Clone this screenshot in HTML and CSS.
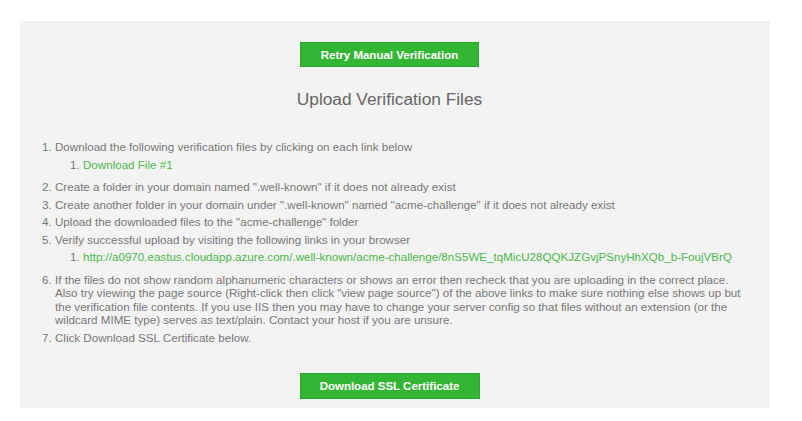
FILE: index.html
```html
<!DOCTYPE html>
<html lang="en">
<head>
    <meta charset="UTF-8">
    <title>Upload Verification Files</title>
    <link rel="stylesheet" href="styles.css">
</head>
<body>
    <div class="panel">
        <div class="center">
            <button class="btn btn-retry">Retry Manual Verification</button>
            <h2>Upload Verification Files</h2>
        </div>

        <ol class="steps">
            <li>Download the following verification files by clicking on each link below
                <ol class="sub">
                    <li><a href="#">Download File #1</a></li>
                </ol>
            </li>
            <li>Create a folder in your domain named ".well-known" if it does not already exist</li>
            <li>Create another folder in your domain under ".well-known" named "acme-challenge" if it does not already exist</li>
            <li>Upload the downloaded files to the "acme-challenge" folder</li>
            <li>Verify successful upload by visiting the following links in your browser
                <ol class="sub">
                    <li><a href="#">http://a0970.eastus.cloudapp.azure.com/.well-known/acme-challenge/8nS5WE_tqMicU28QQKJZGvjPSnyHhXQb_b-FoujVBrQ</a></li>
                </ol>
            </li>
            <li>If the files do not show random alphanumeric characters or shows an error then recheck that you are uploading in the correct place.<br>
                Also try viewing the page source (Right-click then click "view page source") of the above links to make sure nothing else shows up but<br>
                the verification file contents. If you use IIS then you may have to change your server config so that files without an extension (or the<br>
                wildcard MIME type) serves as text/plain. Contact your host if you are unsure.</li>
            <li>Click Download SSL Certificate below.</li>
        </ol>

        <div class="center">
            <button class="btn btn-download">Download SSL Certificate</button>
        </div>
    </div>
</body>
</html>
```

FILE: styles.css
```css
body {
    margin: 0;
    background-color: white;
    font-family: "Liberation Sans", Arial, sans-serif;
}

.panel {
    width: 739px;
    margin: 21px 0 0 20px;
    padding: 21px 11px 9px 0;
    background-color: #f3f3f3;
}

.center {
    text-align: center;
}

.btn {
    font-family: "Liberation Sans", Arial, sans-serif;
    font-weight: bold;
    font-size: 11.5px;
    color: white;
    background-color: #33b633;
    border: 1px solid #2aa82a;
    width: 180px;
    height: 26px;
    padding: 0;
    cursor: pointer;
}

.btn-retry {
    width: 179px;
    height: 25px;
}

h2 {
    font-weight: normal;
    font-size: 17.3px;
    line-height: 20px;
    color: #666;
    margin: 22px 0 31px 0;
}

.steps {
    margin: 0 0 29px 0;
    padding-left: 35px;
    font-size: 11.6px;
    line-height: 13.5px;
    color: #777;
}

.steps li {
    margin-bottom: 4px;
}

.steps li:last-child {
    margin-bottom: 0;
}

.sub {
    margin: 4px 0 9px 0;
    padding-left: 28px;
}

.sub li {
    margin: 0;
}

a {
    color: #4ab84a;
    text-decoration: none;
}
```
